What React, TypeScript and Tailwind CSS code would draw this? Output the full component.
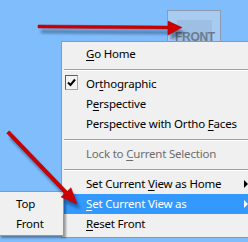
import React from "react";

const FONT = '"Noto Sans", "Open Sans", sans-serif';

type RowProps = {
  pre?: string;
  u?: string;
  post?: string;
  disabled?: boolean;
  active?: boolean;
  sub?: boolean;
  check?: boolean;
};

function Row({ pre = "", u = "", post = "", disabled, active, sub, check }: RowProps) {
  return (
    <div
      className={
        "relative flex h-[20px] items-center pl-[24px] text-[11.5px] leading-none tracking-[-0.2px] whitespace-nowrap " +
        (active ? "bg-[#3399ff] text-white " : disabled ? "text-[#6d6d6d] " : "text-black ")
      }
    >
      {check && (
        <div className="absolute left-[3px] top-[1px] flex h-[15px] w-[13px] items-center justify-center border border-t-[#5e5e5e] border-l-[#5e5e5e] border-r-[#a8a8a8] border-b-[#a8a8a8] bg-[#f4f4f4]">
          <svg width="9" height="9" viewBox="0 0 9 9">
            <path d="M1 4.5 L3.5 7 L8 1.5" fill="none" stroke="#000" strokeWidth="2" />
          </svg>
        </div>
      )}
      <span>
        {pre}
        {u && <span className="underline underline-offset-[2px]">{u}</span>}
        {post}
      </span>
      {sub && (
        <svg className="absolute left-[182px] top-[6px]" width="5" height="8" viewBox="0 0 5 8">
          <path d="M0 0 L4 4 L0 8 Z" fill={active ? "#ffffff" : "#000000"} />
        </svg>
      )}
    </div>
  );
}

function Sep() {
  return (
    <div className="h-[10px] pt-[5px] pl-[2px]">
      <div className="h-[2px] border-t border-t-[#a0a0a0] border-b border-b-[#ffffff]" />
    </div>
  );
}

export default function App() {
  return (
    <div
      className="relative h-[242px] w-[248px] overflow-hidden bg-[#7fbdfc]"
      style={{ fontFamily: FONT }}
    >
      {/* ViewCube */}
      <div className="absolute left-[167px] top-[10px] h-[40px] w-[54px] border border-[#8c9bb0] bg-[#a8cbf1]">
        <div className="absolute left-[9px] top-[9px] h-[30px] w-[35px] bg-[#9dbfe4]" />
        <div
          className="absolute left-[7px] top-[20px] text-[12px] font-bold leading-none tracking-[-0.3px] text-[#6a7b8f]"
          style={{ fontFamily: '"Liberation Sans", Arial, sans-serif' }}
        >
          FRONT
        </div>
      </div>

      {/* Main context menu */}
      <div className="absolute left-[61px] top-[41px] flex w-[200px] flex-col border border-[#979797] bg-[#f0f0f0] pt-[2px] pb-[3px]">
        <Row u="G" post="o Home" />
        <Sep />
        <Row check pre="Or" u="t" post="hographic" />
        <Row pre="P" u="e" post="rspective" />
        <Row pre="Perspective with Ortho " u="F" post="aces" />
        <Sep />
        <Row disabled pre="Lock to " u="C" post="urrent Selection" />
        <Sep />
        <Row sub pre="Set Current " u="V" post="iew as Home" />
        <Row sub active u="S" post="et Current View as" />
        <Row u="R" post="eset Front" />
      </div>

      {/* Submenu */}
      <div className="absolute left-[-1px] top-[191px] flex w-[65px] flex-col border border-[#979797] bg-[#f0f0f0] pt-[2px] pb-[1px] text-[11.5px] leading-none tracking-[-0.2px] text-black shadow-[2px_2px_2px_rgba(0,0,0,0.35)]">
        <div className="flex h-[20px] items-center pl-[16px]">Top</div>
        <div className="flex h-[20px] items-center pl-[16px]">Front</div>
      </div>

      {/* Annotation arrows */}
      <svg className="pointer-events-none absolute left-0 top-0" width="248" height="242" viewBox="0 0 248 242">
        <defs>
          <filter id="blur" x="-20%" y="-20%" width="140%" height="140%">
            <feGaussianBlur stdDeviation="1.6" />
          </filter>
        </defs>
        <g filter="url(#blur)" fill="rgba(10,20,60,0.45)" transform="translate(3,5)">
          <polygon points="38,25 168,26 168,21 182,27.5 168,35 168,29 38,28" />
          <polygon points="9.3,130.8 67.3,191.3 71,187.7 77,204 61,197 64.7,193.7 6.7,133.2" />
        </g>
        <g fill="#cc0000" stroke="#a80000" strokeWidth="0.5">
          <polygon points="38,25 168,26 168,21 182,27.5 168,35 168,29 38,28" />
          <polygon points="9.3,130.8 67.3,191.3 71,187.7 77,204 61,197 64.7,193.7 6.7,133.2" />
        </g>
      </svg>
    </div>
  );
}
